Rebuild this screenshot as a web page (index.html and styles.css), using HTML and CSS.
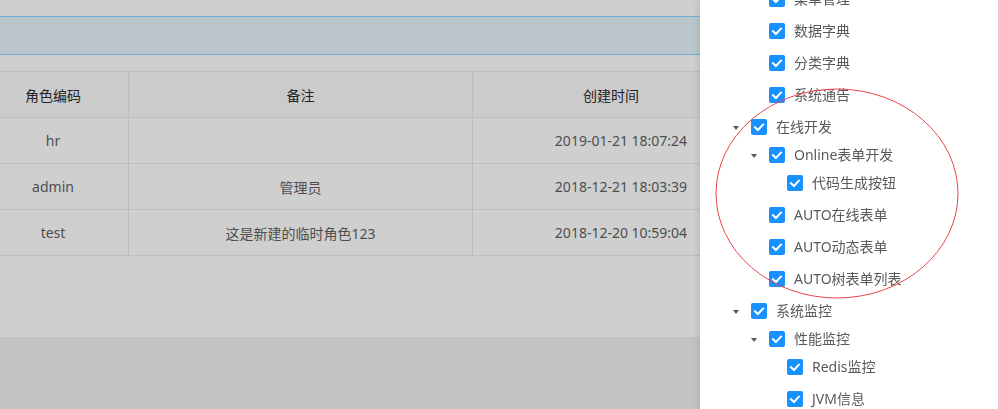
FILE: index.html
```html
<!DOCTYPE html>
<html lang="zh-CN">
<head>
<meta charset="utf-8">
<title>角色授权</title>
<link rel="stylesheet" href="styles.css">
</head>
<body>
<div class="page">
  <div class="card">
    <div class="alert"></div>
    <div class="table">
      <div class="row head">
        <div class="cell c1">角色编码</div>
        <div class="cell c2">备注</div>
        <div class="cell c3">创建时间</div>
        <div class="cell c4"></div>
      </div>
      <div class="row">
        <div class="cell c1">hr</div>
        <div class="cell c2"></div>
        <div class="cell c3 date">2019-01-21 18:07:24</div>
        <div class="cell c4"></div>
      </div>
      <div class="row">
        <div class="cell c1">admin</div>
        <div class="cell c2">管理员</div>
        <div class="cell c3 date">2018-12-21 18:03:39</div>
        <div class="cell c4"></div>
      </div>
      <div class="row">
        <div class="cell c1">test</div>
        <div class="cell c2">这是新建的临时角色123</div>
        <div class="cell c3 date">2018-12-20 10:59:04</div>
        <div class="cell c4"></div>
      </div>
    </div>
  </div>
  <div class="footer"></div>
</div>

<aside class="drawer">
  <div class="drawer-body">
    <ul class="tree">
      <li>
        <div class="node"><span class="switcher"><i class="caret"></i></span><span class="cb"><svg viewBox="0 0 16 16"><polyline points="4,8.2 6.9,11 12,5.6"/></svg></span><span class="label">系统管理</span></div>
        <ul class="children">
          <li><div class="node"><span class="switcher"></span><span class="cb"><svg viewBox="0 0 16 16"><polyline points="4,8.2 6.9,11 12,5.6"/></svg></span><span class="label">用户管理</span></div></li>
          <li><div class="node"><span class="switcher"></span><span class="cb"><svg viewBox="0 0 16 16"><polyline points="4,8.2 6.9,11 12,5.6"/></svg></span><span class="label">角色管理</span></div></li>
          <li><div class="node"><span class="switcher"></span><span class="cb"><svg viewBox="0 0 16 16"><polyline points="4,8.2 6.9,11 12,5.6"/></svg></span><span class="label">菜单管理</span></div></li>
          <li><div class="node"><span class="switcher"></span><span class="cb"><svg viewBox="0 0 16 16"><polyline points="4,8.2 6.9,11 12,5.6"/></svg></span><span class="label">数据字典</span></div></li>
          <li><div class="node"><span class="switcher"></span><span class="cb"><svg viewBox="0 0 16 16"><polyline points="4,8.2 6.9,11 12,5.6"/></svg></span><span class="label">分类字典</span></div></li>
          <li><div class="node"><span class="switcher"></span><span class="cb"><svg viewBox="0 0 16 16"><polyline points="4,8.2 6.9,11 12,5.6"/></svg></span><span class="label">系统通告</span></div></li>
        </ul>
      </li>
      <li>
        <div class="node"><span class="switcher"><i class="caret"></i></span><span class="cb"><svg viewBox="0 0 16 16"><polyline points="4,8.2 6.9,11 12,5.6"/></svg></span><span class="label">在线开发</span></div>
        <ul class="children">
          <li>
            <div class="node"><span class="switcher"><i class="caret"></i></span><span class="cb"><svg viewBox="0 0 16 16"><polyline points="4,8.2 6.9,11 12,5.6"/></svg></span><span class="label">Online表单开发</span></div>
            <ul class="children">
              <li><div class="node"><span class="switcher"></span><span class="cb"><svg viewBox="0 0 16 16"><polyline points="4,8.2 6.9,11 12,5.6"/></svg></span><span class="label">代码生成按钮</span></div></li>
            </ul>
          </li>
          <li><div class="node"><span class="switcher"></span><span class="cb"><svg viewBox="0 0 16 16"><polyline points="4,8.2 6.9,11 12,5.6"/></svg></span><span class="label">AUTO在线表单</span></div></li>
          <li><div class="node"><span class="switcher"></span><span class="cb"><svg viewBox="0 0 16 16"><polyline points="4,8.2 6.9,11 12,5.6"/></svg></span><span class="label">AUTO动态表单</span></div></li>
          <li><div class="node"><span class="switcher"></span><span class="cb"><svg viewBox="0 0 16 16"><polyline points="4,8.2 6.9,11 12,5.6"/></svg></span><span class="label">AUTO树表单列表</span></div></li>
        </ul>
      </li>
      <li>
        <div class="node"><span class="switcher"><i class="caret"></i></span><span class="cb"><svg viewBox="0 0 16 16"><polyline points="4,8.2 6.9,11 12,5.6"/></svg></span><span class="label">系统监控</span></div>
        <ul class="children">
          <li>
            <div class="node"><span class="switcher"><i class="caret"></i></span><span class="cb"><svg viewBox="0 0 16 16"><polyline points="4,8.2 6.9,11 12,5.6"/></svg></span><span class="label">性能监控</span></div>
            <ul class="children">
              <li><div class="node"><span class="switcher"></span><span class="cb"><svg viewBox="0 0 16 16"><polyline points="4,8.2 6.9,11 12,5.6"/></svg></span><span class="label">Redis监控</span></div></li>
              <li><div class="node"><span class="switcher"></span><span class="cb"><svg viewBox="0 0 16 16"><polyline points="4,8.2 6.9,11 12,5.6"/></svg></span><span class="label">JVM信息</span></div></li>
              <li><div class="node"><span class="switcher"></span><span class="cb"><svg viewBox="0 0 16 16"><polyline points="4,8.2 6.9,11 12,5.6"/></svg></span><span class="label">Tomcat信息</span></div></li>
            </ul>
          </li>
        </ul>
      </li>
    </ul>
  </div>
  <svg class="circle" viewBox="0 0 244 212" width="244" height="212"><ellipse cx="122" cy="105.5" rx="121" ry="104.5"/></svg>
</aside>
</body>
</html>
```

FILE: styles.css
```css
* { box-sizing: border-box; }
html, body { margin: 0; padding: 0; }
body {
  width: 998px;
  height: 409px;
  overflow: hidden;
  font-family: "Noto Sans", "Noto Sans CJK SC", sans-serif;
  font-size: 14px;
  background: #c2c3c5;
}
.page { width: 998px; }
.card {
  background: #cfcfcf;
  padding-top: 16px;
  height: 337px;
}
.alert {
  height: 39px;
  background: #bbc6cc;
  border-top: 1px solid #6fb0da;
  border-bottom: 1px solid #6fb0da;
}
.table {
  margin-top: 16px;
  border-top: 1px solid #bdbdbd;
}
.row {
  display: grid;
  grid-template-columns: 129px 344px 277px 1fr;
  height: 46px;
  border-bottom: 1px solid #bdbdbd;
  color: #4e4e4e;
}
.row.head { background: #cbcbcb; color: #232323; }
.cell {
  display: flex;
  align-items: center;
  justify-content: center;
  border-right: 1px solid #bdbdbd;
  white-space: nowrap;
}
.c1 { padding-right: 22px; }
.date { padding-left: 20px; }
.footer { height: 72px; background: #c2c3c5; }

.drawer {
  position: fixed;
  top: 0;
  left: 700px;
  width: 298px;
  height: 409px;
  background: #fff;
  box-shadow: -2px 0 6px rgba(0, 0, 0, 0.10);
  overflow: hidden;
}
.drawer-body { padding-left: 24px; }
.tree, .tree ul { list-style: none; margin: 0; padding: 0; }
.tree { margin-top: -109px; }
.tree li { padding: 4px 0; }
.tree .children { padding-left: 18px; }
.tree .children > li:last-child { padding-bottom: 0; }
.node {
  display: flex;
  align-items: center;
  height: 24px;
  white-space: nowrap;
  color: #595959;
}
.switcher {
  width: 24px;
  height: 24px;
  display: flex;
  align-items: center;
  justify-content: center;
  flex: none;
}
.caret {
  width: 0;
  height: 0;
  border-left: 3.5px solid transparent;
  border-right: 3.5px solid transparent;
  border-top: 4px solid #595959;
  margin-top: 1px;
}
.cb {
  width: 16px;
  height: 16px;
  flex: none;
  margin: 0 4px 0 3px;
  background: #1890ff;
  border-radius: 2px;
  display: flex;
}
.cb svg { width: 16px; height: 16px; }
.cb polyline { fill: none; stroke: #fff; stroke-width: 2; stroke-linecap: square; stroke-linejoin: miter; }
.label { padding: 0 5px; line-height: 24px; }

.circle {
  position: absolute;
  left: 15px;
  top: 88px;
}
.circle ellipse { fill: none; stroke: #e9464a; stroke-width: 1; }
```
